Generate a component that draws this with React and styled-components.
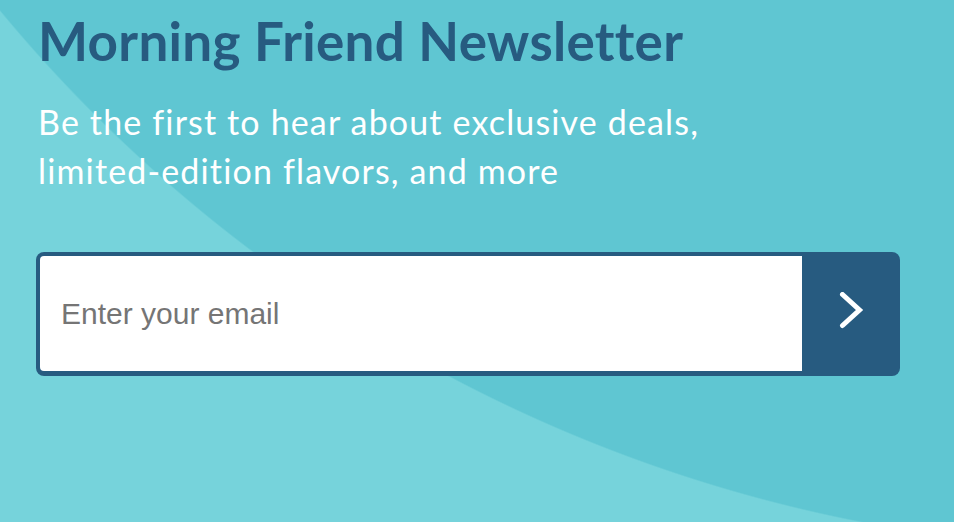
import React from "react";
import styled, { createGlobalStyle } from "styled-components";

const GlobalStyle = createGlobalStyle`
  * { box-sizing: border-box; }
  html, body { margin: 0; padding: 0; }
  body { background: #5fc6d2; }
`;

const Section = styled.section`
  width: 954px;
  height: 522px;
  overflow: hidden;
  padding: 9px 0 0 38px;
  font-family: Lato, "Open Sans", sans-serif;
  background: radial-gradient(
    circle 1487px at 1145px -937px,
    #5fc6d2 99.9%,
    #76d3db 100%
  );
`;

const Title = styled.h1`
  margin: 0;
  font-size: 53px;
  line-height: 64px;
  font-weight: 700;
  letter-spacing: 0.3px;
  color: #275b80;
`;

const Lead = styled.p`
  margin: 24px 0 0;
  font-size: 34px;
  line-height: 49px;
  font-weight: 400;
  letter-spacing: 1.15px;
  color: #ffffff;
`;

const Form = styled.form`
  display: flex;
  width: 864px;
  height: 124px;
  margin: 57px 0 0 -2px;
  padding: 4px 0 5px 4px;
  border-radius: 8px;
  background: #275b80;
`;

const EmailInput = styled.input`
  flex: 1;
  min-width: 0;
  border: none;
  outline: none;
  border-radius: 4px 0 0 4px;
  padding: 0 0 0 21px;
  background: #ffffff;
  font-family: "Liberation Sans", Arial, sans-serif;
  font-size: 30px;
  color: #333;

  &::placeholder {
    color: #757575;
  }
`;

const Submit = styled.button`
  display: flex;
  align-items: center;
  justify-content: center;
  width: 98px;
  border: none;
  padding: 0;
  background: transparent;
  cursor: pointer;
`;

const Chevron = () => (
  <svg width="30" height="44" viewBox="0 0 30 44" fill="none">
    <path
      d="M6.5 2.5 L23.5 18 L6.5 33.5"
      stroke="#ffffff"
      strokeWidth="5"
      strokeLinecap="round"
      strokeLinejoin="miter"
    />
  </svg>
);

export default function App() {
  return (
    <>
      <GlobalStyle />
      <Section>
        <Title>Morning Friend Newsletter</Title>
        <Lead>
          Be the first to hear about exclusive deals,
          <br />
          limited-edition flavors, and more
        </Lead>
        <Form onSubmit={(e) => e.preventDefault()}>
          <EmailInput type="email" placeholder="Enter your email" />
          <Submit type="submit" aria-label="Subscribe">
            <Chevron />
          </Submit>
        </Form>
      </Section>
    </>
  );
}
